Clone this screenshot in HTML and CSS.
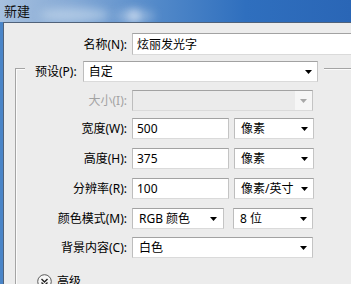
FILE: index.html
```html
<!DOCTYPE html>
<html lang="zh-CN">
<head>
<meta charset="utf-8">
<title>新建</title>
<link rel="stylesheet" href="styles.css">
</head>
<body>
<div class="window">
  <div class="titlebar">
    <span class="blur b1"></span><span class="blur b2"></span><span class="blur b3"></span>
    <span class="title">新建</span>
  </div>
  <div class="frame">
    <div class="content">
      <div class="row name-row">
        <span class="lbl lbl-top">名称(N):</span>
        <div class="field name-field">炫丽发光字</div>
      </div>
      <div class="group">
        <div class="legend">
          <span class="legend-lbl">预设(P):</span>
          <div class="combo preset"><span class="val">自定</span><svg class="arrow" width="7" height="4" viewBox="0 0 7 4"><polygon points="0,0 7,0 3.5,4" fill="#000"/></svg></div>
        </div>
        <div class="rows">
          <div class="row r-size">
            <span class="lbl disabled">大小(I):</span>
            <div class="combo wide is-disabled"><span class="val"></span><span class="arrow-box"><svg class="arrow" width="7" height="4" viewBox="0 0 7 4"><polygon points="0,0 7,0 3.5,4" fill="#a8a8a8"/></svg></span></div>
          </div>
          <div class="row r-w">
            <span class="lbl">宽度(W):</span>
            <div class="field num">500</div>
            <div class="combo unit"><span class="val">像素</span><svg class="arrow" width="7" height="4" viewBox="0 0 7 4"><polygon points="0,0 7,0 3.5,4" fill="#000"/></svg></div>
          </div>
          <div class="row r-h">
            <span class="lbl">高度(H):</span>
            <div class="field num">375</div>
            <div class="combo unit"><span class="val">像素</span><svg class="arrow" width="7" height="4" viewBox="0 0 7 4"><polygon points="0,0 7,0 3.5,4" fill="#000"/></svg></div>
          </div>
          <div class="row r-r">
            <span class="lbl">分辨率(R):</span>
            <div class="field num">100</div>
            <div class="combo unit"><span class="val">像素/英寸</span><svg class="arrow" width="7" height="4" viewBox="0 0 7 4"><polygon points="0,0 7,0 3.5,4" fill="#000"/></svg></div>
          </div>
          <div class="row r-m">
            <span class="lbl">颜色模式(M):</span>
            <div class="combo mode"><span class="val">RGB 颜色</span><svg class="arrow" width="7" height="4" viewBox="0 0 7 4"><polygon points="0,0 7,0 3.5,4" fill="#000"/></svg></div>
            <div class="combo unit"><span class="val">8 位</span><svg class="arrow" width="7" height="4" viewBox="0 0 7 4"><polygon points="0,0 7,0 3.5,4" fill="#000"/></svg></div>
          </div>
          <div class="row r-c">
            <span class="lbl">背景内容(C):</span>
            <div class="combo wide"><span class="val">白色</span><svg class="arrow" width="7" height="4" viewBox="0 0 7 4"><polygon points="0,0 7,0 3.5,4" fill="#000"/></svg></div>
          </div>
          <div class="advanced">
            <svg class="adv-icon" width="15" height="15" viewBox="0 0 15 15"><circle cx="7.5" cy="7.5" r="6.8" fill="#f7f7f7" stroke="#5a5a5a" stroke-width="1"/><polyline points="4.5,5 7.5,8 10.5,5" fill="none" stroke="#222" stroke-width="1.4"/><polyline points="4.5,8.5 7.5,11.5 10.5,8.5" fill="none" stroke="#222" stroke-width="1.4"/></svg>
            <span class="adv-text">高级</span>
            <span class="adv-line"></span>
          </div>
        </div>
      </div>
    </div>
  </div>
</div>
</body>
</html>
```

FILE: styles.css
```css
html, body {
  margin: 0;
  padding: 0;
}
body {
  width: 351px;
  height: 284px;
  overflow: hidden;
  background: #4a85c8;
  font-family: "Noto Sans", "Noto Sans CJK SC", sans-serif;
  font-size: 12px;
  color: #000;
}
.window {
  width: 351px;
  height: 284px;
  display: flex;
  flex-direction: column;
}
.titlebar {
  position: relative;
  height: 22px;
  flex: none;
  overflow: hidden;
  background: linear-gradient(90deg, #a6c0de 0%, #86aad6 20%, #5289c9 45%, #2f6fbe 70%, #2a66b6 100%);
}
.blur {
  position: absolute;
  border-radius: 50%;
  filter: blur(5px);
}
.b1 { left: 40px; top: 8px; width: 70px; height: 14px; background: rgba(210, 225, 240, 0.55); }
.b2 { left: 115px; top: 10px; width: 40px; height: 12px; background: rgba(200, 218, 238, 0.45); }
.b3 { left: 128px; top: 11px; width: 12px; height: 10px; background: rgba(235, 240, 250, 0.8); }
.title {
  position: relative;
  display: block;
  padding-left: 4px;
  font-size: 13px;
  line-height: 22px;
  color: #111;
}
.frame {
  flex: 1;
  display: flex;
  padding-left: 3px;
}
.content {
  flex: 1;
  background: #ececec;
  border-left: 1px solid #50627a;
  border-top: 1px solid #50627a;
  padding-top: 10px;
  overflow: hidden;
}
.row {
  display: flex;
  align-items: center;
  height: 21px;
}
.lbl {
  flex: none;
  text-align: right;
  line-height: 21px;
  margin-right: 5px;
  white-space: nowrap;
}
.lbl-top {
  width: 123px;
}
.rows .lbl {
  width: 111px;
}
.lbl.disabled {
  color: #a3a3a3;
}
.name-row {
  height: 22px;
}
.field, .combo {
  box-sizing: border-box;
  height: 21px;
  background: #fff;
  border: 1px solid;
  border-color: #a2a2a2 #c4c4c4 #dadada #bdbdbd;
  display: flex;
  align-items: center;
  line-height: 19px;
  white-space: nowrap;
  flex: none;
}
.field {
  padding-left: 4px;
}
.name-field {
  width: 240px;
  height: 22px;
  border-right: none;
}
.num {
  width: 97px;
}
.combo {
  padding-left: 6px;
  padding-right: 5px;
}
.combo .val {
  flex: 1;
}
.combo .arrow {
  flex: none;
  display: block;
}
.preset {
  width: 235px;
  padding-left: 5px;
}
.wide {
  width: 181px;
}
.unit {
  width: 80px;
  margin-left: 5px;
}
.mode {
  width: 92px;
  padding-right: 6px;
}
.mode + .unit {
  margin-left: 9px;
}
.is-disabled {
  background: #ebebeb;
  padding-right: 0;
  align-items: stretch;
}
.arrow-box {
  width: 17px;
  background: #f6f6f6;
  display: flex;
  align-items: center;
  justify-content: center;
}
.group {
  margin-left: 11px;
  margin-top: 13px;
  border-left: 1px solid #a4a4a4;
  border-top: 1px solid #a4a4a4;
  box-shadow: inset 1px 1px 0 #fbfbfb;
}
.legend {
  display: flex;
  align-items: center;
  width: fit-content;
  height: 21px;
  margin-top: -8px;
  margin-left: 9px;
  padding: 0 6px 0 10px;
  background: #ececec;
}
.legend-lbl {
  line-height: 21px;
  margin-right: 6px;
}
.rows {
  display: flex;
  flex-direction: column;
  padding-top: 8px;
}
.r-w { margin-top: 7px; }
.r-h, .r-r, .r-m { margin-top: 9px; }
.r-c { margin-top: 8px; }
.advanced {
  display: flex;
  align-items: center;
  margin-top: 16px;
  margin-left: 21px;
  height: 15px;
}
.adv-icon {
  flex: none;
  display: block;
}
.adv-text {
  margin-left: 5px;
  line-height: 15px;
}
.adv-line {
  width: 218px;
  height: 0;
  border-top: 1px solid #a4a4a4;
  margin-left: 2px;
  align-self: flex-end;
  margin-bottom: 4px;
}
```
